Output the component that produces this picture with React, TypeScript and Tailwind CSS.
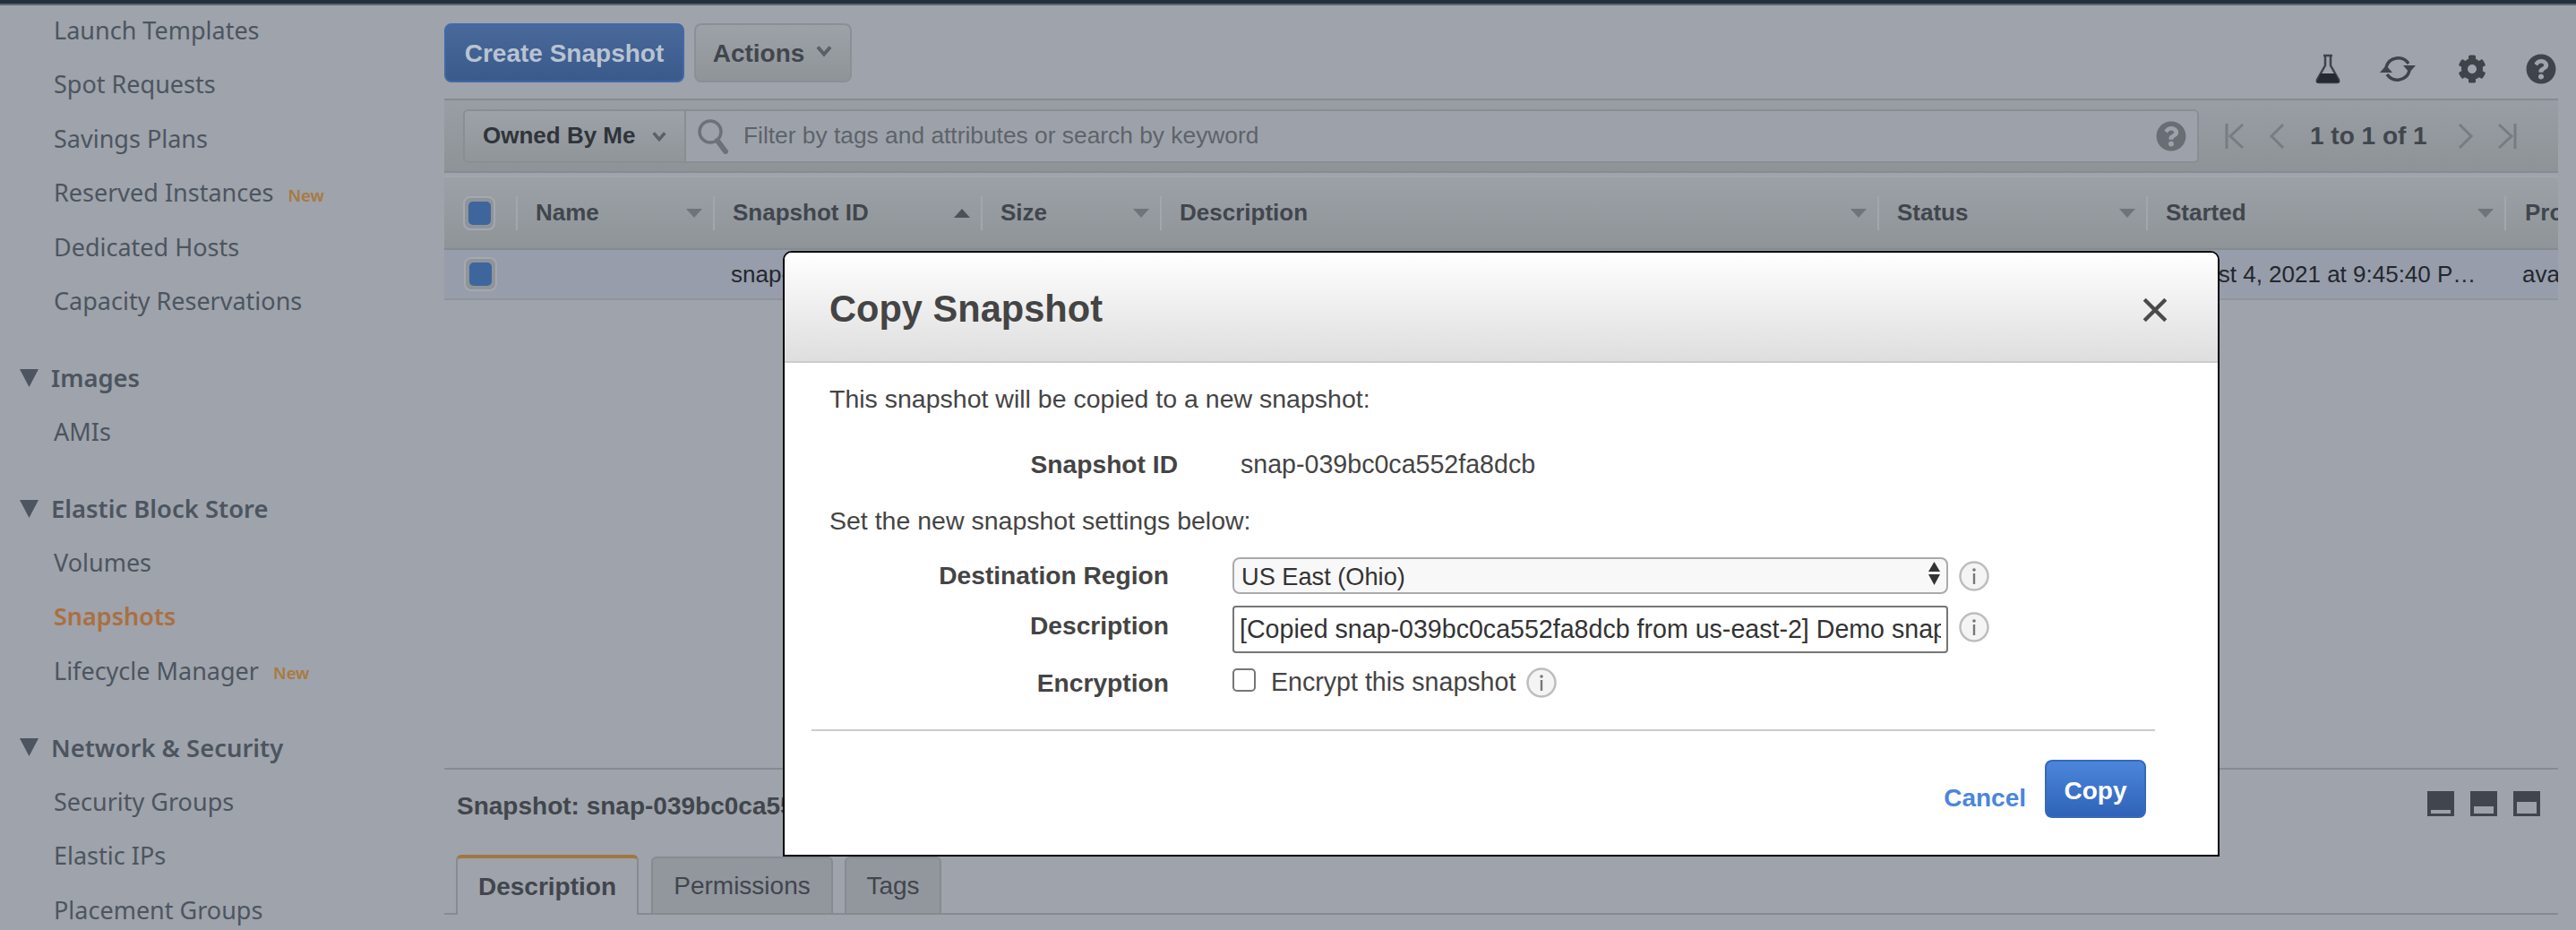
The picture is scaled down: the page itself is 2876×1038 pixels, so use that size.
import { FaCog, FaQuestionCircle } from "react-icons/fa";

const arial = "font-['Liberation_Sans',Arial,sans-serif]";

function Chevron({ className = "" }: { className?: string }) {
  return (
    <svg viewBox="0 0 20 14" className={className} fill="none">
      <path d="M3 3 L10 11 L17 3" stroke="currentColor" strokeWidth="4" />
    </svg>
  );
}

function Caret({ up = false }: { up?: boolean }) {
  return (
    <svg viewBox="0 0 18 10" className={`w-[18px] h-[10px] ${up ? "text-[#4d5258]" : "text-[#6f747a]"}`}>
      <path d={up ? "M0 10 L9 0 L18 10 Z" : "M0 0 L18 0 L9 10 Z"} fill="currentColor" />
    </svg>
  );
}

function Box({ row = false }: { row?: boolean }) {
  return (
    <div className={`${row ? "w-[37px] h-[38px]" : "w-[36px] h-[38px]"} rounded-[8px] border-2 border-[#a5a9af] bg-[#8f9499] flex items-center justify-center`}>
      <div className="w-[25px] h-[26px] rounded-[5px] bg-[#3f659d]" />
    </div>
  );
}

function Info() {
  return (
    <svg viewBox="0 0 34 34" className="w-[34px] h-[34px] shrink-0">
      <circle cx="17" cy="17" r="15.5" fill="#f4f4f4" stroke="#bdbdbd" strokeWidth="2.5" />
      <circle cx="17" cy="10" r="1.8" fill="#777" />
      <rect x="15.8" y="14" width="2.4" height="12" fill="#777" />
    </svg>
  );
}

function NavItem({ label, badge, active }: { label: string; badge?: boolean; active?: boolean }) {
  return (
    <div className={`h-[60.45px] pl-[60px] flex items-center whitespace-nowrap ${active ? "text-[#ab6f41] font-semibold" : "text-[#4c5560]"}`}>
      <span>{label}</span>
      {badge && <span className="ml-[16px] mt-[4px] text-[18.5px] font-semibold text-[#a97a3e]">New</span>}
    </div>
  );
}

function NavHead({ label }: { label: string }) {
  return (
    <div className="mt-[25px] h-[60.45px] flex items-center whitespace-nowrap font-semibold text-[27.4px] text-[#4c5560]">
      <svg viewBox="0 0 21 20" className="ml-[22px] mr-[14px] w-[21px] h-[20px] text-[#4c5560]">
        <path d="M0 0 L21 0 L10.5 20 Z" fill="currentColor" />
      </svg>
      <span>{label}</span>
    </div>
  );
}

const cols = [
  { w: "w-[220px]", label: "Name" },
  { w: "w-[299px]", label: "Snapshot ID", up: true },
  { w: "w-[200px]", label: "Size" },
  { w: "w-[801px]", label: "Description" },
  { w: "w-[300px]", label: "Status" },
  { w: "w-[400px]", label: "Started" },
];

function HeaderCell({ w, label, up }: { w: string; label: string; up?: boolean }) {
  return (
    <div className={`${w} shrink-0 h-[38px] border-l-2 border-[#a3a7ad] pl-[20px] pr-[12px] flex items-center justify-between`}>
      <span>{label}</span>
      <Caret up={up} />
    </div>
  );
}

function PanelIcon({ fill }: { fill: number }) {
  return (
    <svg viewBox="0 0 30 28" className="w-[30px] h-[28px]">
      <rect width="30" height="28" fill="#41454d" />
      <rect x="4" y={25 - fill} width="22" height={fill} fill="#9da1a8" />
    </svg>
  );
}

export default function App() {
  return (
    <div className={`relative w-[2876px] h-[1038px] overflow-hidden bg-[#9fa3ab] ${arial} flex flex-col`}>
      <div className="h-[6px] shrink-0 bg-[#232f3e] border-b-2 border-[#5c6570]" />
      <div className="flex flex-1 min-h-0">
        {/* Sidebar */}
        <aside className="w-[496px] shrink-0 -mt-[2px] overflow-hidden text-[27px] font-['Noto_Sans',sans-serif]">
          <NavItem label="Launch Templates" />
          <NavItem label="Spot Requests" />
          <NavItem label="Savings Plans" />
          <NavItem label="Reserved Instances" badge />
          <NavItem label="Dedicated Hosts" />
          <NavItem label="Capacity Reservations" />
          <NavHead label="Images" />
          <NavItem label="AMIs" />
          <NavHead label="Elastic Block Store" />
          <NavItem label="Volumes" />
          <NavItem label="Snapshots" active />
          <NavItem label="Lifecycle Manager" badge />
          <NavHead label="Network & Security" />
          <NavItem label="Security Groups" />
          <NavItem label="Elastic IPs" />
          <NavItem label="Placement Groups" />
        </aside>

        {/* Main */}
        <main className="w-[2360px] shrink-0 flex flex-col min-h-0 overflow-hidden">
          <div className="h-[104px] shrink-0 pt-[20px] flex items-start">
            <button className="w-[268px] h-[66px] rounded-[8px] border-2 border-[#3f6aa8] bg-gradient-to-b from-[#48699a] to-[#395a8b] pt-[2px] text-[28px] font-bold text-[#b9c3d1]">
              Create Snapshot
            </button>
            <button className="ml-[11px] w-[176px] h-[66px] rounded-[8px] border-2 border-[#8b9096] bg-gradient-to-b from-[#9da2a8] to-[#8f9499] pt-[2px] text-[28px] font-bold text-[#41464d] flex items-center justify-center gap-[12px]">
              Actions
              <Chevron className="w-[20px] h-[15px] mb-[8px] text-[#5b6066]" />
            </button>
            <div className="ml-auto mt-[33px] flex items-center text-[#3f444b]">
              <svg viewBox="0 0 30 34" className="w-[30px] h-[34px]">
                <path d="M10 2 H20 M12 2 V13 L3 29 Q2 32 5 32 H25 Q28 32 27 29 L18 13 V2" fill="none" stroke="#3f444b" strokeWidth="2.5" />
                <path d="M7 22 H23 L28 32 H2 Z" fill="#252a31" />
              </svg>
              <svg viewBox="0 0 42 36" className="ml-[42px] w-[42px] h-[36px]" fill="none" stroke="#3f444b" strokeWidth="3.5">
                <path d="M8 16 A14 14 0 0 1 33 12" />
                <path d="M34 20 A14 14 0 0 1 9 24" />
                <path d="M27 14 H41 L34 22 Z" fill="#3f444b" stroke="none" />
                <path d="M1 22 H15 L8 14 Z" fill="#3f444b" stroke="none" />
              </svg>
              <FaCog className="ml-[46px] w-[32px] h-[34px]" />
              <FaQuestionCircle className="ml-[44px] mr-[2px] w-[34px] h-[34px]" />
            </div>
          </div>

          {/* Filter band */}
          <div className="h-[83px] shrink-0 border-t-2 border-b-2 border-[#868b90] bg-gradient-to-b from-[#999ea4] to-[#8e9398] pl-[21px] flex items-center">
            <div className="w-[1938px] h-[60px] rounded-[6px] border-2 border-[#898e93] flex overflow-hidden">
              <div className="w-[247px] shrink-0 border-r-2 border-[#898e93] bg-gradient-to-b from-[#9da2a8] to-[#90959a] pl-[20px] flex items-center text-[26px] font-bold text-[#2f343a]">
                Owned By Me
                <Chevron className="ml-[18px] w-[18px] h-[14px] text-[#5b6066]" />
              </div>
              <div className="flex-1 bg-[#9da2aa] flex items-center">
                <svg viewBox="0 0 36 40" className="ml-[12px] w-[36px] h-[40px]" fill="none" stroke="#6d7278">
                  <circle cx="15" cy="15" r="12" strokeWidth="3.5" />
                  <path d="M23 25 L32 37" strokeWidth="6" strokeLinecap="round" />
                </svg>
                <span className="ml-[16px] text-[26.35px] text-[#5e636a]">Filter by tags and attributes or search by keyword</span>
                <FaQuestionCircle className="ml-auto mr-[12px] w-[34px] h-[34px] text-[#696e74]" />
              </div>
            </div>
            <svg viewBox="0 0 24 30" className="ml-[28px] w-[24px] h-[30px]" fill="none" stroke="#777c82" strokeWidth="3">
              <path d="M3 1 V29 M21 2 L7 15 L21 28" />
            </svg>
            <svg viewBox="0 0 18 30" className="ml-[26px] w-[18px] h-[30px]" fill="none" stroke="#777c82" strokeWidth="3">
              <path d="M16 2 L3 15 L16 28" />
            </svg>
            <span className="ml-[28px] w-[130px] whitespace-nowrap text-[28px] font-bold text-[#41464d]">1 to 1 of 1</span>
            <svg viewBox="0 0 18 30" className="ml-[35px] w-[18px] h-[30px]" fill="none" stroke="#777c82" strokeWidth="3">
              <path d="M2 2 L15 15 L2 28" />
            </svg>
            <svg viewBox="0 0 24 30" className="ml-[25px] w-[24px] h-[30px]" fill="none" stroke="#777c82" strokeWidth="3">
              <path d="M21 1 V29 M3 2 L17 15 L3 28" />
            </svg>
          </div>

          {/* Table header */}
          <div className="mt-[3px] h-[83px] shrink-0 border-t-2 border-[#a3a7ad] border-b-2 border-b-[#868b90] bg-gradient-to-b from-[#9ca1a7] to-[#8f9499] flex items-center text-[26px] font-bold text-[#41464d] whitespace-nowrap overflow-hidden">
            <div className="w-[80px] shrink-0 pl-[21px]"><Box /></div>
            {cols.map((c) => (
              <HeaderCell key={c.label} w={c.w} label={c.label} up={c.up} />
            ))}
            <div className="shrink-0 h-[38px] border-l-2 border-[#a3a7ad] pl-[21px] flex items-center">Progress</div>
          </div>

          {/* Selected row */}
          <div className="h-[56px] shrink-0 border-b-2 border-[#8f949b] bg-[#979dab] flex items-center text-[26px] text-[#23272d] whitespace-nowrap overflow-hidden">
            <div className="w-[80px] shrink-0 pl-[22px]"><Box row /></div>
            <div className="w-[240px] shrink-0" />
            <div className="w-[499px] shrink-0">snap-039bc0ca552fa8dcb</div>
            <div className="w-[1101px] shrink-0" />
            <div className="w-[350px] shrink-0 truncate">
              <span>August 4, 2021 at 9:45:40 PM UTC-4</span>
            </div>
            <div className="ml-[50px] shrink-0">available</div>
          </div>

          <div className="flex-1" />

          {/* Details pane */}
          <div className="h-[181px] shrink-0 border-t-2 border-[#868b90] flex flex-col">
            <div className="h-[95px] shrink-0 pl-[14px] pr-[20px] pt-[24px] flex items-start justify-between">
              <span className="text-[28px] font-bold text-[#41464d] whitespace-nowrap leading-[32px] mt-[1px]">
                Snapshot: snap-039bc0ca552fa8dcb
              </span>
              <div className="flex gap-[18px]">
                <PanelIcon fill={4} />
                <PanelIcon fill={8} />
                <PanelIcon fill={13} />
              </div>
            </div>
            <div className="h-[67px] shrink-0 border-b-2 border-[#868b90] flex items-end pl-[13px] text-[28px]">
              <div className="w-[204px] h-[67px] -mb-[2px] rounded-t-[6px] border-t-4 border-t-[#a2773f] border-x-2 border-x-[#868b90] bg-[#9fa3ab] font-bold text-[#41464d] flex items-center justify-center">
                Description
              </div>
              <div className="ml-[14px] w-[203px] h-[63px] rounded-t-[6px] border-t-2 border-x-2 border-[#868b90] bg-[#92979e] text-[#41464d] flex items-center justify-center">
                Permissions
              </div>
              <div className="ml-[13px] w-[108px] h-[63px] rounded-t-[6px] border-t-2 border-x-2 border-[#868b90] bg-[#92979e] text-[#41464d] flex items-center justify-center">
                Tags
              </div>
            </div>
          </div>
        </main>
      </div>

      {/* Modal */}
      <div className="absolute left-[874px] top-[280px] w-[1604px] h-[676px] bg-white border-2 border-black rounded-t-[10px] overflow-hidden text-[28.5px] text-[#444444]">
        <div className="h-[123px] border-b-2 border-[#cccccc] bg-gradient-to-b from-white to-[#dedede] pl-[50px] pr-[58px] flex items-center justify-between">
          <h1 className="text-[41.6px] font-bold text-[#444444] mt-[6px]">Copy Snapshot</h1>
          <svg viewBox="0 0 28 28" className="w-[30px] h-[30px] mt-[6px] -mr-[3px]">
            <path d="M3 3 L25 25 M25 3 L3 25" stroke="#4a4a4a" strokeWidth="4" />
          </svg>
        </div>

        <div className="pt-[20px]">
          <p className="pl-[50px] h-[40px] leading-[40px]">This snapshot will be copied to a new snapshot:</p>
          <div className="mt-[33px] h-[40px] flex items-center">
            <span className="w-[439px] text-right font-bold text-[28.2px]">Snapshot ID</span>
            <span className="ml-[70px] text-[28.6px]">snap-039bc0ca552fa8dcb</span>
          </div>
          <p className="pl-[50px] mt-[23px] h-[40px] leading-[40px]">Set the new snapshot settings below:</p>

          <div className="mt-[21px] h-[41px] flex items-center">
            <span className="w-[429px] text-right font-bold text-[28.2px]">Destination Region</span>
            <div className="relative ml-[71px] w-[799px] h-[41px]">
              <select className="w-full h-full appearance-none rounded-[8px] border-2 border-[#aaaaaa] bg-[#f8f8f8] pl-[8px] text-[27.2px] text-[#333333]">
                <option>US East (Ohio)</option>
              </select>
              <svg viewBox="0 0 17 26" className="absolute right-[7px] top-[5px] w-[17px] h-[26px]">
                <path d="M8.5 0 L15 11 H2 Z" fill="#333" />
                <path d="M2 14 H15 L8.5 26 Z" fill="#333" />
              </svg>
            </div>
            <div className="ml-[12px]"><Info /></div>
          </div>

          <div className="mt-[13px] h-[53px] flex items-center">
            <span className="w-[429px] text-right font-bold text-[28.2px] -mt-[8px]">Description</span>
            <input
              readOnly
              value="[Copied snap-039bc0ca552fa8dcb from us-east-2] Demo snapshot"
              className="ml-[71px] w-[799px] h-[53px] rounded-[4px] border-2 border-[#767676] bg-white pl-[6px] pr-[6px] text-[28.6px] text-[#333333]"
            />
            <div className="ml-[12px] -mt-[6px]"><Info /></div>
          </div>

          <div className="mt-[13px] h-[40px] flex items-center">
            <span className="w-[429px] text-right font-bold text-[28.2px]">Encryption</span>
            <div className="ml-[71px] w-[26px] h-[26px] -mt-[6px] rounded-[5px] border-2 border-[#767676] bg-white" />
            <span className="ml-[17px] -mt-[2px] text-[28.6px]">Encrypt this snapshot</span>
            <div className="ml-[12px]"><Info /></div>
          </div>

          <div className="mt-[32px] ml-[30px] w-[1500px] h-[2px] bg-[#cccccc]" />

          <div className="mt-[32px] pr-[80px] flex justify-end items-start text-[28px]">
            <button className="mt-[22px] h-[40px] font-bold text-[#4a86dc]">Cancel</button>
            <button className="ml-[21px] w-[113px] h-[65px] rounded-[8px] border-2 border-[#3768bb] bg-gradient-to-b from-[#4c86da] to-[#2f63b8] font-bold text-white pt-[5px]">
              Copy
            </button>
          </div>
        </div>
      </div>
    </div>
  );
}
